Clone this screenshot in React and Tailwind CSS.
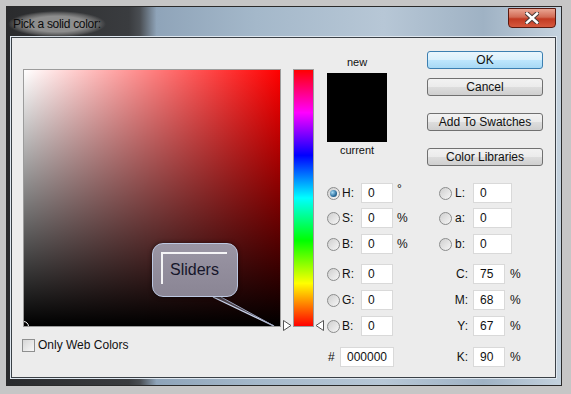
import React from 'react';

const ui = "font-['Liberation_Sans',Arial,sans-serif]";

function Radio({ on }) {
  return (
    <span className="flex h-[13px] w-[13px] shrink-0 items-center justify-center rounded-full border border-[#8b8c8c] bg-[linear-gradient(135deg,#cfcfcf,#f6f6f6)]">
      {on && <span className="h-[7px] w-[7px] rounded-full bg-[radial-gradient(circle_at_35%_35%,#a8dcf6,#2a6e9e_60%,#1b3f5a)]" />}
    </span>
  );
}

function Box({ value, className }) {
  return (
    <div className={`flex h-[20px] shrink-0 items-center border border-[#d9d9d9] bg-white pl-[6px] text-[12px] text-[#111] ${className}`}>
      {value}
    </div>
  );
}

function Btn({ children, primary }) {
  return (
    <div
      className={
        primary
          ? 'flex h-[18px] items-center justify-center rounded-[3px] border border-[#3c7fb1] bg-[linear-gradient(to_bottom,#eaf6fd,#d9f0fc_50%,#bee6fd_51%,#a7d9f5)] text-[12px] text-[#111]'
          : 'flex h-[18px] items-center justify-center rounded-[3px] border border-[#707070] bg-[linear-gradient(to_bottom,#f2f2f2,#ebebeb_50%,#dddddd_51%,#cfcfcf)] text-[12px] text-[#111]'
      }
    >
      {children}
    </div>
  );
}

function LeftCell({ label, value, unit, on }) {
  return (
    <div className="flex w-[112px] items-center">
      <Radio on={on} />
      <span className="ml-[2px] w-[19px] text-[12px] text-[#111]">{label}</span>
      <Box value={value} className="w-[32px]" />
      <span className="ml-[4px] text-[12px] text-[#111]">{unit}</span>
    </div>
  );
}

function LabCell({ label, value }) {
  return (
    <div className="flex items-center">
      <Radio />
      <span className="ml-[3px] w-[18px] text-[12px] text-[#111]">{label}</span>
      <Box value={value} className="w-[39px]" />
    </div>
  );
}

function CmykCell({ label, value }) {
  return (
    <div className="flex items-center">
      <span className="w-[34px] pr-[5px] text-right text-[12px] text-[#111]">{label}</span>
      <Box value={value} className="w-[32px]" />
      <span className="ml-[5px] text-[12px] text-[#111]">%</span>
    </div>
  );
}

export default function App() {
  return (
    <div className={`h-[394px] w-[571px] overflow-hidden bg-[#c6c6c6] pl-[6px] pt-[6px] ${ui}`}>
      <div className="flex h-[380px] w-[556px] flex-col border border-[#2b2b2b] bg-[linear-gradient(to_right,#2a2b2d_0%,#3a3c3f_22%,#4a4e53_24%,#8fa4b9_27%,#a4b8ca_45%,#b7c7d6_68%,#9fb2c4_86%,#c4d2de_100%)]">
        {/* title bar */}
        <div className="relative flex h-[30px] shrink-0 items-center pl-px pt-[4px]">
          <span className="rounded-[12px] bg-[radial-gradient(closest-side,#8e8e8e_60%,rgba(120,120,120,0.6)_85%,transparent)] px-[5px] py-[4px] text-[12px] tracking-[-0.3px] text-[#0c0c0c]">
            Pick a solid color:
          </span>
          <div className="absolute right-[5px] top-[1px] flex h-[20px] w-[48px] items-center justify-center rounded-b-[4px] border border-[#5a1a10] bg-[linear-gradient(to_bottom,#e9a593,#d26a54_45%,#c23a22_55%,#d6593e)]">
            <svg width="14" height="12" viewBox="0 0 14 12">
              <path d="M2 1.5 L12 10.5 M12 1.5 L2 10.5" stroke="#4a3a38" strokeWidth="4.5" strokeLinecap="square" />
              <path d="M2 1.5 L12 10.5 M12 1.5 L2 10.5" stroke="#ffffff" strokeWidth="2.5" strokeLinecap="square" />
            </svg>
          </div>
        </div>

        {/* client */}
        <div className="ml-[4px] h-[341px] w-[545px] shrink-0 border border-[#3b4147] bg-[#ececec] shadow-[0_0_0_1px_#dfe7ef]">
          <div className="flex items-start">
            {/* color field */}
            <div className="ml-[11px] mt-[31px] flex flex-col">
              <div className="relative h-[258px] w-[258px] overflow-hidden border border-[#9c9c9c] bg-[linear-gradient(to_top,#000,transparent),linear-gradient(to_right,#fff,#f00)]">
                <div className="absolute -bottom-[6px] -left-[6px] h-[11px] w-[11px] rounded-full border border-white" />
                <svg className="absolute left-0 top-0" width="256" height="256">
                  <polygon points="189,227 197,227 250,256" fill="rgba(120,116,132,0.55)" />
                  <line x1="189" y1="227" x2="250" y2="256" stroke="#c9d2ea" strokeWidth="1.3" />
                  <line x1="197" y1="227" x2="250" y2="256" stroke="#9aa2bc" strokeWidth="1" />
                </svg>
                <div className="absolute left-[128px] top-[173px] h-[54px] w-[86px] rounded-[11px] border border-[#bcc8e2] bg-[linear-gradient(to_bottom,#9a95a4,#8a8594)] shadow-[0_0_4px_rgba(0,0,0,0.6)]">
                  <div className="absolute left-[8px] top-[8px] h-[32px] w-[66px] border-l-2 border-t-2 border-white/90" />
                  <span className="absolute left-[17px] top-[17px] text-[16px] leading-[18px] text-[#16162a]">Sliders</span>
                </div>
              </div>
              <div className="-ml-[1px] mt-[9px] flex items-center">
                <span className="h-[13px] w-[13px] border border-[#8e8f8f] bg-[linear-gradient(135deg,#d6d6d6,#f7f7f7)]" />
                <span className="ml-[3px] text-[12px] text-[#111]">Only Web Colors</span>
              </div>
            </div>

            {/* hue bar */}
            <div className="relative ml-[12px] mt-[31px] h-[258px] w-[21px] border border-[#9c9c9c] bg-[linear-gradient(to_bottom,#ff0000_0%,#ff00ff_16.67%,#0000ff_33.33%,#00ffff_50%,#00ff00_66.67%,#ffff00_83.33%,#ff0000_100%)]">
              <svg className="absolute -bottom-[5px] -left-[11px]" width="9" height="11" viewBox="0 0 9 11">
                <polygon points="0.5,0.5 8,5.5 0.5,10.5" fill="#fff" stroke="#555" strokeWidth="1" />
              </svg>
              <svg className="absolute -bottom-[5px] -right-[11px]" width="9" height="11" viewBox="0 0 9 11">
                <polygon points="8.5,0.5 1,5.5 8.5,10.5" fill="#fff" stroke="#555" strokeWidth="1" />
              </svg>
            </div>

            {/* controls */}
            <div className="ml-[13px] mt-[13px] flex w-[216px] flex-col">
              <div className="flex">
                <div className="flex w-[60px] flex-col items-center">
                  <span className="mt-[4px] text-[11px] leading-[14px] text-[#111]">new</span>
                  <div className="mt-[4px] h-[69px] w-[60px] bg-black" />
                  <span className="mt-px text-[11px] leading-[14px] text-[#111]">current</span>
                </div>
                <div className="ml-[40px] flex w-[116px] flex-col">
                  <Btn primary>OK</Btn>
                  <div className="mt-[9px]"><Btn>Cancel</Btn></div>
                  <div className="mt-[17px]"><Btn>Add To Swatches</Btn></div>
                  <div className="mt-[17px]"><Btn>Color Libraries</Btn></div>
                </div>
              </div>

              <div className="mt-[17px] flex flex-col">
                <div className="flex h-[20px] items-center">
                  <LeftCell label="H:" value="0" unit={<span className="relative -top-[4px]">°</span>} on />
                  <LabCell label="L:" value="0" />
                </div>
                <div className="mt-[5px] flex h-[20px] items-center">
                  <LeftCell label="S:" value="0" unit="%" />
                  <LabCell label="a:" value="0" />
                </div>
                <div className="mt-[6px] flex h-[20px] items-center">
                  <LeftCell label="B:" value="0" unit="%" />
                  <LabCell label="b:" value="0" />
                </div>
                <div className="mt-[10px] flex h-[20px] items-center">
                  <LeftCell label="R:" value="0" />
                  <CmykCell label="C:" value="75" />
                </div>
                <div className="mt-[6px] flex h-[20px] items-center">
                  <LeftCell label="G:" value="0" />
                  <CmykCell label="M:" value="68" />
                </div>
                <div className="mt-[6px] flex h-[20px] items-center">
                  <LeftCell label="B:" value="0" />
                  <CmykCell label="Y:" value="67" />
                </div>
                <div className="mt-[11px] flex h-[20px] items-center">
                  <div className="flex w-[112px] items-center">
                    <span className="ml-px w-[12px] text-[12px] text-[#111]">#</span>
                    <Box value="000000" className="w-[54px]" />
                  </div>
                  <CmykCell label="K:" value="90" />
                </div>
              </div>
            </div>
          </div>
        </div>
      </div>
    </div>
  );
}
